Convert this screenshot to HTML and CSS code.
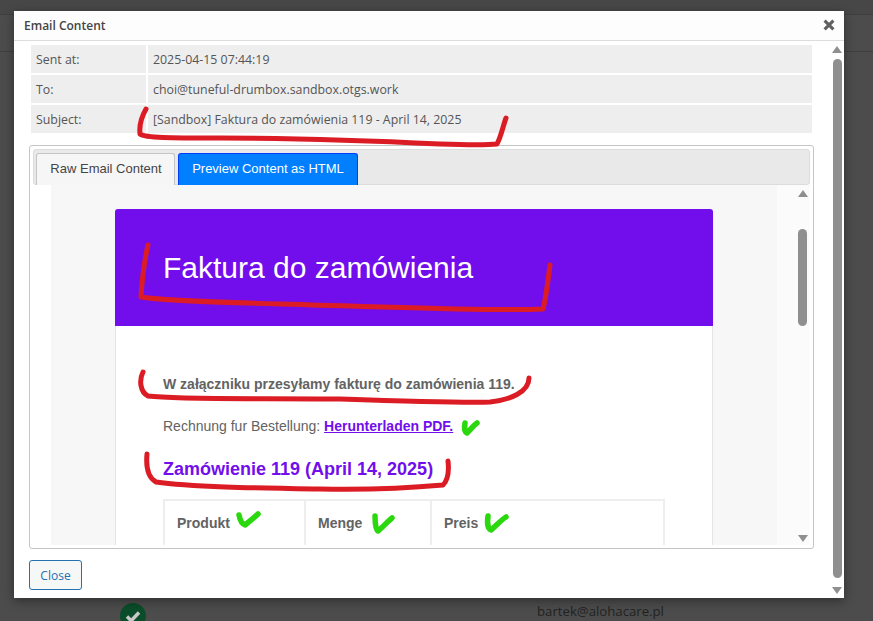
FILE: index.html
```html
<!DOCTYPE html>
<html lang="en">
<head>
<meta charset="utf-8">
<title>Email Content</title>
<link rel="stylesheet" href="styles.css">
</head>
<body>
<div class="backdrop">
  <div class="bg-top"></div>
  <div class="bg-line"></div>
  <svg class="bg-check" viewBox="0 0 26 26" width="26" height="26"><circle cx="13" cy="13" r="13" fill="#0b4d2a"/><path d="M7 13.5l4.2 4.2L19 9.5" fill="none" stroke="#c9c9c9" stroke-width="3.4"/></svg>
  <div class="bg-email">bartek@alohacare.pl</div>
</div>
<section class="modal">
  <header class="modal-head">
    <h1 class="modal-title">Email Content</h1>
    <svg class="close-x" viewBox="0 0 12 12" width="12" height="12"><path d="M1.6 1.6l8.8 8.8M10.4 1.6l-8.8 8.8" stroke="#5f5f5f" stroke-width="3.1" fill="none"/></svg>
  </header>
  <div class="modal-main">
    <div class="modal-content">
      <div class="meta">
        <div class="meta-label">Sent at:</div><div class="meta-value">2025-04-15 07:44:19</div>
        <div class="meta-label">To:</div><div class="meta-value">choi@tuneful-drumbox.sandbox.otgs.work</div>
        <div class="meta-label">Subject:</div><div class="meta-value">[Sandbox] Faktura do zamówienia 119 - April 14, 2025</div>
      </div>
      <div class="panel">
        <div class="tabs">
          <div class="tab">Raw Email Content</div>
          <div class="tab tab-active">Preview Content as HTML</div>
        </div>
        <div class="preview">
          <div class="mail-bg">
            <div class="mail-card">
              <div class="mail-head"><h2 class="mail-h">Faktura do zamówienia</h2></div>
              <div class="mail-body">
                <p class="mail-strong">W załączniku przesyłamy fakturę do zamówienia 119.</p>
                <p class="mail-p">Rechnung fur Bestellung: <a class="mail-link" href="#">Herunterladen PDF.</a></p>
                <h3 class="mail-order">Zamówienie 119 (April 14, 2025)</h3>
                <div class="mail-table">
                  <div class="cell cell-a">Produkt</div>
                  <div class="cell cell-b">Menge</div>
                  <div class="cell cell-c">Preis</div>
                </div>
              </div>
            </div>
          </div>
          <div class="inner-scroll">
            <span class="arrow-up"></span>
            <div class="inner-track"><div class="inner-thumb"></div></div>
            <span class="arrow-down"></span>
          </div>
        </div>
      </div>
      <div class="modal-foot"><button class="close-btn" type="button">Close</button></div>
    </div>
    <div class="outer-scroll">
      <span class="arrow-up"></span>
      <div class="outer-thumb"></div>
      <span class="arrow-down"></span>
    </div>
  </div>
</section>
<svg class="marks" viewBox="0 0 873 621" width="873" height="621">
  <g class="mark-red">
    <path d="M146 109C142 116 139 125 140 134C145 138 170 138 220 138C290 138 380 141 440 144C470 145 488 145 497 144C501 137 503 126 506 118"/>
    <path d="M148 245C145 258 142 280 141 297C170 302 260 303 350 306C420 308 500 311 543 309C546 298 548 280 550 265"/>
    <path d="M143 372C139 380 140 392 148 396C180 400 270 398 340 399C400 401 460 403 490 402C510 400 529 392 529 378"/>
    <path d="M147 454C146 465 147 477 156 482C190 487 260 488 320 489C370 490 410 488 443 485C448 480 449 470 448 461"/>
  </g>
  <g class="mark-green">
    <path d="M465 423C464 428 465 432 467 433C471 429 474 425 477 423"/>
    <path d="M239 515C240 520 242 524 245 525C250 521 255 517 258 514"/>
    <path d="M375 516C375 524 376 530 378 531C383 527 388 521 392 518"/>
    <path d="M488 516C487 523 488 529 491 530C496 526 501 520 506 517"/>
  </g>
</svg>
</body>
</html>
```
FILE: styles.css
```css
html, body {
  margin: 0;
  padding: 0;
  width: 873px;
  height: 621px;
  overflow: hidden;
  background: #4c4c4c;
  font-family: "Open Sans", sans-serif;
}
.backdrop {
  position: absolute;
  inset: 0;
}
.bg-top {
  height: 14px;
  background: #474747;
  border-bottom: 1px solid #3f3f3f;
}
.bg-line {
  height: 1px;
  margin-top: 36px;
  background: #3f3f3f;
}
.bg-check {
  position: absolute;
  left: 120px;
  top: 603px;
}
.bg-email {
  position: absolute;
  left: 537px;
  top: 601px;
  font-size: 13.2px;
  line-height: 20px;
  color: #222;
}
.modal {
  position: absolute;
  left: 14px;
  top: 11px;
  width: 830px;
  height: 587px;
  background: #fff;
  box-shadow: 0 3px 10px rgba(0, 0, 0, 0.4);
  display: flex;
  flex-direction: column;
}
.modal-head {
  height: 30px;
  box-sizing: border-box;
  flex: none;
  background: #fdfdfd;
  border-bottom: 1px solid #ddd;
  display: flex;
  align-items: center;
  justify-content: space-between;
  padding: 0 9px 1px 10px;
}
.modal-title {
  margin: 2px 0 0;
  font-size: 12px;
  font-weight: 600;
  color: #444;
  line-height: 26px;
}
.modal-main {
  flex: 1;
  display: flex;
  min-height: 0;
}
.modal-content {
  width: 800px;
  flex: none;
  padding: 4px 0 0 15px;
  box-sizing: border-box;
}
.meta {
  display: grid;
  grid-template-columns: 115px 664px;
  gap: 2px;
  margin-left: 2px;
}
.meta-label, .meta-value {
  height: 28px;
  line-height: 30px;
  background: #eee;
  padding-left: 5px;
  font-size: 12.35px;
  color: #555;
  box-sizing: border-box;
}
.panel {
  margin-top: 12px;
  width: 785px;
  height: 404px;
  box-sizing: border-box;
  border: 1px solid #c5c5c5;
  border-radius: 3px;
  padding: 3px;
  display: flex;
  flex-direction: column;
}
.tabs {
  height: 36px;
  flex: none;
  background: #e9e9e9;
  border: 1px solid #dcdcdc;
  border-radius: 3px;
  box-sizing: border-box;
  padding: 3px 0 0 2px;
  display: flex;
  gap: 3px;
}
.tab {
  height: 32px;
  box-sizing: border-box;
  border: 1px solid #c5c5c5;
  border-bottom: 0;
  border-radius: 3px 3px 0 0;
  background: #f6f6f6;
  color: #454545;
  font-family: "Liberation Sans", sans-serif;
  font-size: 13px;
  line-height: 30px;
  width: 139px;
  padding-left: 1px;
  text-align: center;
}
.tab-active {
  width: 180px;
  padding-left: 0;
  background: #007fff;
  border-color: #003eff;
  color: #fff;
}
.preview {
  flex: 1;
  min-height: 0;
  display: flex;
  overflow: hidden;
}
.mail-bg {
  margin-left: 18px;
  width: 726px;
  height: 361px;
  background: #f7f7f7;
  padding: 24px 64px 0;
  box-sizing: border-box;
  overflow: hidden;
  flex: none;
}
.mail-card {
  width: 598px;
  background: #fff;
  border-radius: 3px 3px 0 0;
  border-left: 1px solid #e4e4e4;
  border-right: 1px solid #e4e4e4;
  box-sizing: border-box;
  font-family: "Liberation Sans", sans-serif;
  height: 400px;
}
.mail-head {
  height: 117px;
  background: #720eec;
  margin: 0 -1px;
  border-radius: 3px 3px 0 0;
  display: flex;
  align-items: center;
  padding-left: 48px;
  box-sizing: border-box;
}
.mail-h {
  margin: 0;
  color: #fff;
  font-size: 30px;
  font-weight: 300;
  line-height: 36px;
}
.mail-body {
  padding: 48px 47px 0;
}
.mail-strong, .mail-p {
  margin: 0;
  font-size: 14px;
  line-height: 21px;
  color: #636363;
}
.mail-strong {
  font-weight: 700;
}
.mail-p {
  margin-top: 21px;
}
.mail-link {
  color: #720eec;
  font-weight: 700;
}
.mail-order {
  margin: 19px 0 0;
  color: #720eec;
  font-size: 18px;
  font-weight: 700;
  line-height: 27px;
}
.mail-table {
  margin-top: 16px;
  width: 502px;
  height: 70px;
  box-sizing: border-box;
  border: 2px solid #eee;
  display: grid;
  grid-template-columns: 141px 126px 1fr;
}
.cell {
  font-size: 14px;
  font-weight: 700;
  color: #636363;
  padding: 14px 12px;
  line-height: 17px;
}
.cell-a, .cell-b {
  border-right: 2px solid #eee;
}
.inner-scroll {
  width: 33px;
  height: 361px;
  flex: none;
  background: #fbfbfb;
  display: flex;
  flex-direction: column;
  align-items: center;
  padding: 5px 0 4px 18px;
  box-sizing: border-box;
}
.inner-track {
  flex: 1;
  width: 9px;
  padding-top: 32px;
}
.inner-thumb {
  width: 9px;
  height: 97px;
  background: #8f8f8f;
  border-radius: 5px;
}
.arrow-up, .arrow-down {
  width: 0;
  height: 0;
  flex: none;
  border-left: 5px solid transparent;
  border-right: 5px solid transparent;
}
.arrow-up {
  border-bottom: 7px solid #8f8f8f;
}
.arrow-down {
  border-top: 7px solid #8f8f8f;
}
.modal-foot {
  padding-top: 11px;
}
.close-btn {
  width: 53px;
  height: 30px;
  background: #f6f7f7;
  border: 1px solid #2271b1;
  border-radius: 3px;
  color: #2271b1;
  font-family: "Open Sans", sans-serif;
  font-size: 12px;
  padding: 0;
}
.outer-scroll {
  width: 30px;
  flex: none;
  display: flex;
  flex-direction: column;
  align-items: center;
  padding: 5px 0 4px 16px;
  box-sizing: border-box;
}
.outer-thumb {
  flex: 1;
  width: 9px;
  margin: 6px 0 9px;
  background: #8f8f8f;
  border-radius: 5px;
}
.marks {
  position: absolute;
  left: 0;
  top: 0;
  pointer-events: none;
}
.mark-red path {
  fill: none;
  stroke: #dc1c24;
  stroke-width: 5;
  stroke-linecap: round;
  stroke-linejoin: round;
}
.mark-green path {
  fill: none;
  stroke: #2bd80e;
  stroke-width: 5.5;
  stroke-linecap: round;
  stroke-linejoin: round;
}
```
